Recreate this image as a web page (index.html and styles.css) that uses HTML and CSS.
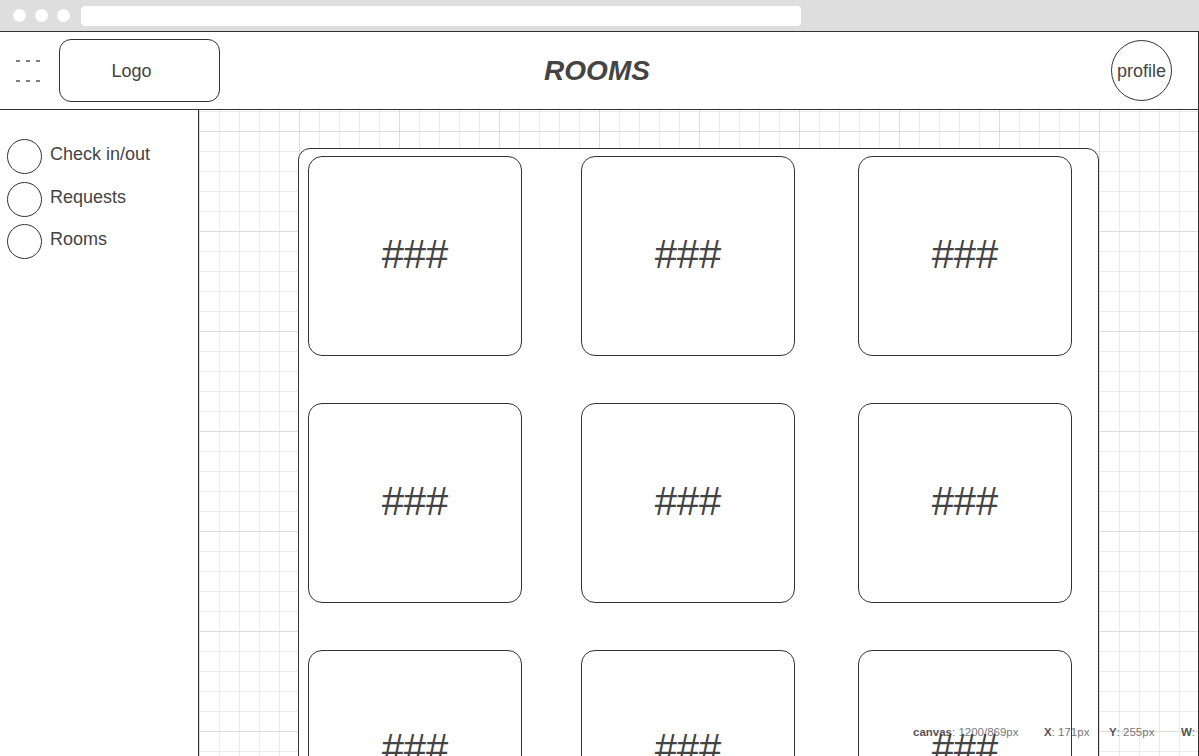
FILE: index.html
```html
<!DOCTYPE html>
<html lang="en">
<head>
  <meta charset="UTF-8">
  <title>Rooms</title>
  <link rel="stylesheet" href="styles.css">
</head>
<body>
  <div class="chrome">
    <span class="dot"></span>
    <span class="dot"></span>
    <span class="dot"></span>
    <div class="address"></div>
  </div>

  <header class="topbar">
    <div class="left-group">
      <svg class="burger" width="30" height="24" viewBox="0 0 30 24">
        <line x1="2" y1="2" x2="30" y2="2" />
        <line x1="2" y1="22" x2="30" y2="22" />
      </svg>
      <div class="logo">Logo</div>
    </div>
    <h1 class="title">ROOMS</h1>
    <div class="right-group">
      <div class="profile">profile</div>
    </div>
  </header>

  <div class="layout">
    <nav class="sidebar">
      <div class="nav-item"><span class="nav-circle"></span><span class="nav-label">Check in/out</span></div>
      <div class="nav-item"><span class="nav-circle"></span><span class="nav-label">Requests</span></div>
      <div class="nav-item"><span class="nav-circle"></span><span class="nav-label">Rooms</span></div>
    </nav>

    <main class="canvas">
      <div class="rooms-box">
        <div class="room">###</div>
        <div class="room">###</div>
        <div class="room">###</div>
        <div class="room">###</div>
        <div class="room">###</div>
        <div class="room">###</div>
        <div class="room">###</div>
        <div class="room">###</div>
        <div class="room">###</div>
      </div>
    </main>
  </div>

  <!-- editor readout floating over the canvas -->
  <div class="readout">
    <span><b>canvas</b>: 1200/869px</span>
    <span class="rx"><b>X</b>: 171px</span>
    <span class="ry"><b>Y</b>: 255px</span>
    <span class="rw"><b>W</b>:</span>
  </div>
</body>
</html>
```

FILE: styles.css
```css
* { box-sizing: border-box; }
html, body {
  margin: 0;
  height: 756px;
  overflow: hidden;
}
body {
  font-family: "Liberation Sans", Arial, sans-serif;
  color: #444;
  background: #fff;
  position: relative;
}

/* browser chrome */
.chrome {
  height: 32px;
  background: #dedede;
  border-bottom: 1px solid #333;
  display: flex;
  align-items: center;
  padding-left: 13px;
  gap: 9px;
}
.dot {
  width: 13px;
  height: 13px;
  border-radius: 50%;
  background: #fff;
}
.address {
  margin-left: 2px;
  width: 720px;
  height: 20px;
  background: #fff;
  border-radius: 4px;
}

/* header */
.topbar {
  height: 78px;
  border-bottom: 1px solid #333;
  border-right: 1px solid #333;
  display: grid;
  grid-template-columns: 1fr auto 1fr;
  align-items: center;
}
.left-group {
  display: flex;
  align-items: center;
  gap: 15px;
  padding-left: 14px;
}
.burger line {
  stroke: #555;
  stroke-width: 1.3;
  stroke-dasharray: 4 6;
}
.logo {
  width: 161px;
  height: 63px;
  border: 1px solid #333;
  border-radius: 12px;
  display: flex;
  align-items: center;
  justify-content: center;
  padding: 2px 16px 0 0;
  font-size: 18px;
}
.title {
  margin: 0 0 0 -4px;
  font-size: 28px;
  font-weight: 700;
  font-style: italic;
  color: #444;
}
.right-group {
  display: flex;
  justify-content: flex-end;
  padding-right: 26px;
}
.profile {
  width: 61px;
  height: 61px;
  border: 1px solid #333;
  border-radius: 50%;
  display: flex;
  align-items: center;
  justify-content: center;
  padding-top: 2px;
  font-size: 18px;
}

/* body */
.layout {
  display: flex;
  height: 646px;
}
.sidebar {
  width: 199px;
  border-right: 1px solid #333;
  padding: 29px 0 0 7px;
  display: flex;
  flex-direction: column;
  gap: 7.5px;
}
.nav-item {
  display: flex;
  align-items: flex-start;
  gap: 8px;
}
.nav-circle {
  width: 35px;
  height: 35px;
  border: 1px solid #333;
  border-radius: 50%;
  flex: none;
}
.nav-label {
  font-size: 18px;
  line-height: 20px;
  margin-top: 5px;
}

.canvas {
  flex: 1;
  border-right: 1px solid #333;
  padding: 38px 0 0 99px;
  overflow: hidden;
  background-color: #fff;
  background-image:
    linear-gradient(to right, #dcdcdc 1px, transparent 1px),
    linear-gradient(to bottom, #dcdcdc 1px, transparent 1px),
    linear-gradient(to right, #ebebeb 1px, transparent 1px),
    linear-gradient(to bottom, #ebebeb 1px, transparent 1px);
  background-size: 100px 100px, 100px 100px, 20px 20px, 20px 20px;
  background-position: 0 21px, 0 21px, 0 1px, 0 1px;
}
.rooms-box {
  width: 801px;
  min-height: 700px;
  border: 1px solid #333;
  border-radius: 12px;
  background: #fff;
  padding: 7px 0 0 9px;
  display: grid;
  grid-template-columns: repeat(3, 214px);
  grid-auto-rows: 200px;
  column-gap: 61px;
  row-gap: 47px;
}
.room {
  width: 214px;
  border: 1px solid #333;
  border-radius: 14px;
  display: flex;
  align-items: center;
  justify-content: center;
  font-size: 40px;
  color: #444;
  padding-bottom: 4px;
  position: relative;
  z-index: 2;
}
.room:nth-child(3n+2) { margin-left: -2px; }

/* floating readout */
.readout {
  position: absolute;
  left: 913px;
  top: 726px;
  font-size: 11.5px;
  color: #777;
  white-space: nowrap;
  z-index: 1;
}
.readout b { color: #555; }
.readout .rx { position: absolute; left: 131px; }
.readout .ry { position: absolute; left: 196px; }
.readout .rw { position: absolute; left: 268px; }
```
